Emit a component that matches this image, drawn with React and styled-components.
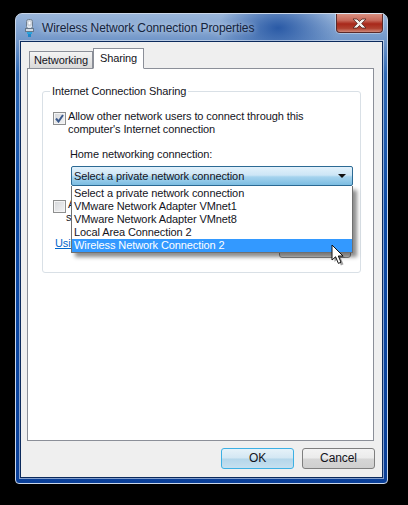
import React from 'react'
import styled, { createGlobalStyle } from 'styled-components'

const options = [
    'Select a private network connection',
    'VMware Network Adapter VMnet1',
    'VMware Network Adapter VMnet8',
    'Local Area Connection 2',
    'Wireless Network Connection 2',
]

function PlugIcon() {
    return (
        <svg width="9" height="19" viewBox="0 0 9 19">
            <rect x="1.5" y="0.5" width="6" height="9" rx="2" fill="#dfe6ee" stroke="#6f7f90" />
            <rect x="3" y="2" width="3" height="4" fill="#fff" stroke="#9aa6b4" strokeWidth="0.6" />
            <rect x="0.5" y="9.5" width="8" height="3" fill="#cfd8e2" stroke="#66788c" />
            <rect x="2" y="13" width="5" height="2" fill="#29a3dc" />
            <rect x="3" y="15" width="3" height="3" fill="#1f86c8" />
        </svg>
    )
}

function CloseGlyph() {
    return (
        <svg width="15" height="11" viewBox="0 0 15 11">
            <path d="M1 1 H5 L7.5 3.5 L10 1 H14 L9.7 5.5 L14 10 H10 L7.5 7.5 L5 10 H1 L5.3 5.5 Z" fill="#f4f1ee" stroke="#4b2320" strokeWidth="0.8" />
        </svg>
    )
}

function CheckMark() {
    return (
        <svg width="9" height="9" viewBox="0 0 9 9">
            <path d="M1 4.5 L3.5 7.5 L8 1" fill="none" stroke="#3c5a8c" strokeWidth="2" />
        </svg>
    )
}

function Pointer() {
    return (
        <svg width="17" height="22" viewBox="0 0 17 22">
            <path d="M2 2 V17 L5.6 13.8 L8.4 20.4 L11 19.2 L8.3 13 H13 Z" fill="#555" opacity="0.55" transform="translate(1.5 1)" />
            <path d="M1 1 V16 L4.6 12.8 L7.4 19.4 L10 18.2 L7.3 12 H12 Z" fill="#fff" stroke="#111" strokeWidth="1" />
        </svg>
    )
}

function App() {
    return (
        <Desktop>
            <GlobalStyle />
            <Window>
                <TitleBar>
                    <PlugIcon />
                    <Title>Wireless Network Connection Properties</Title>
                    <CloseButton><CloseGlyph /></CloseButton>
                </TitleBar>
                <Client>
                    <Tabs>
                        <Tab>Networking</Tab>
                        <Tab active>Sharing</Tab>
                    </Tabs>
                    <Panel>
                        <Group>
                            <Legend>Internet Connection Sharing</Legend>
                            <CheckRow>
                                <CheckBox checked><CheckMark /></CheckBox>
                                <Label>
                                    Allow other network users to connect through this<br />
                                    computer's Internet connection
                                </Label>
                            </CheckRow>
                            <HomeLabel>Home networking connection:</HomeLabel>
                            <SelectWrap>
                                <SelectFace>
                                    Select a private network connection
                                    <Arrow />
                                </SelectFace>
                                <DropList>
                                    {options.map((item, i) => (
                                        <DropItem key={item} selected={i === 4}>{item}</DropItem>
                                    ))}
                                </DropList>
                            </SelectWrap>
                            <SecondRow>
                                <CheckBox />
                                <Label>
                                    Allow other network users to control or disable the<br />
                                    <Indent>shared Internet connection</Indent>
                                </Label>
                            </SecondRow>
                            <BottomRow>
                                <Link>Using ICS (Internet Connection Sharing)</Link>
                                <SettingsButton>Settings...</SettingsButton>
                            </BottomRow>
                        </Group>
                    </Panel>
                    <Footer>
                        <Button primary>OK</Button>
                        <Button>Cancel</Button>
                    </Footer>
                </Client>
            </Window>
            <CursorSpot><Pointer /></CursorSpot>
        </Desktop>
    )
}

export default App

const GlobalStyle = createGlobalStyle`
    html, body {
        margin: 0;
        padding: 0;
        background: #000;
    }
`

const Desktop = styled.div`
    position: relative;
    width: 408px;
    height: 505px;
    padding: 13px 20px 21px 15px;
    box-sizing: border-box;
    background: #000;
    font-family: "Liberation Sans", Arial, sans-serif;
    font-size: 11px;
    letter-spacing: -0.1px;
    color: #14141c;
    overflow: hidden;
`

const Window = styled.div`
    width: 373px;
    height: 471px;
    box-sizing: border-box;
    display: flex;
    flex-direction: column;
    border: 1px solid #c9d6e8;
    border-radius: 7px 7px 4px 4px;
    padding: 0 4px 5px 4px;
    background:
        radial-gradient(ellipse 60px 34px at 262px 14px, #2a5aa6 0%, rgba(42, 90, 166, 0) 100%),
        linear-gradient(180deg, #9ab6da 0, #6f95c8 28px, #2e68b4 60px, #0c4aa6 200px, #0a3f98 100%);
`

const TitleBar = styled.div`
    height: 27px;
    flex: none;
    display: flex;
    align-items: flex-start;
    padding-left: 5px;
    svg {
        flex: none;
    }
    > svg:first-child {
        margin-top: 5px;
    }
`

const Title = styled.div`
    margin: 6px 0 0 8px;
    font-size: 12px;
    letter-spacing: -0.08px;
    line-height: 16px;
    color: #14233c;
    text-shadow: 0 0 6px rgba(255, 255, 255, 0.75);
    white-space: nowrap;
`

const CloseButton = styled.div`
    margin-left: auto;
    width: 47px;
    height: 19px;
    box-sizing: border-box;
    display: flex;
    align-items: center;
    justify-content: center;
    border: 1px solid #5a2a2a;
    border-top: none;
    border-radius: 0 0 4px 4px;
    background: linear-gradient(180deg, #d88f80 0, #c7695a 35%, #a8281a 55%, #b0412f 80%, #d0897a 100%);
    box-shadow: 0 0 0 1px rgba(255, 255, 255, 0.35);
`

const Client = styled.div`
    flex: 1;
    display: flex;
    flex-direction: column;
    box-sizing: border-box;
    padding: 7px 7px 8px 6px;
    background: #efefef;
    border: 1px solid #0c2a5c;
    box-shadow: 0 0 0 1px rgba(255, 255, 255, 0.5);
`

const Tabs = styled.div`
    height: 20px;
    flex: none;
    display: flex;
    align-items: flex-end;
    padding-left: 2px;
    margin-bottom: -1px;
    position: relative;
    z-index: 1;
`

const Tab = styled.div`
    box-sizing: border-box;
    display: flex;
    justify-content: center;
    border: 1px solid #8b8f98;
    width: ${props => props.active ? '51px' : '64px'};
    height: ${props => props.active ? '21px' : '18px'};
    padding-top: ${props => props.active ? '3px' : '2px'};
    border-bottom: ${props => props.active ? '1px solid #fff' : '1px solid #8b8f98'};
    background: ${props => props.active ? '#fff' : 'linear-gradient(180deg, #f4f4f4, #d9d9d9)'};
    line-height: 13px;
`

const Panel = styled.div`
    flex: 1;
    box-sizing: border-box;
    margin-right: 1px;
    padding: 16px 12px 0 14px;
    background: #fff;
    border: 1px solid #8b8f98;
`

const Group = styled.fieldset`
    position: relative;
    height: 188px;
    box-sizing: border-box;
    margin: 0;
    padding: 0 0 0 10px;
    border: 1px solid #d9e0e6;
    border-radius: 3px;
`

const Legend = styled.legend`
    padding: 0 2px;
    margin-left: -3px;
    line-height: 13px;
`

const CheckRow = styled.div`
    display: flex;
    gap: 2px;
    margin-top: 14px;
    line-height: 13px;
`

const SecondRow = styled(CheckRow)`
    margin-top: 14px;
`

const Label = styled.div`
    white-space: nowrap;
    margin-top: -2px;
`

const Indent = styled.span`
    margin-left: -2px;
`

const CheckBox = styled.div`
    width: 13px;
    height: 13px;
    flex: none;
    box-sizing: border-box;
    display: flex;
    align-items: center;
    justify-content: center;
    border: 1px solid #8e8f8f;
    box-shadow: inset 0 0 0 1px #f4f4f4;
    background: linear-gradient(135deg, #d4d6d9, #f4f4f5);
`

const HomeLabel = styled.div`
    margin: 12px 0 0 17px;
    line-height: 13px;
`

const SelectWrap = styled.div`
    position: relative;
    margin: 5px 7px 0 18px;
`

const SelectFace = styled.div`
    height: 20px;
    box-sizing: border-box;
    display: flex;
    align-items: center;
    justify-content: space-between;
    padding: 0 6px 0 2px;
    border: 1px solid #2c6a94;
    border-radius: 2px;
    background: linear-gradient(180deg, #e2f1fb 0, #cde6f6 45%, #a5d3ee 55%, #7cbde2 100%);
`

const Arrow = styled.span`
    width: 0;
    height: 0;
    border-left: 4px solid transparent;
    border-right: 4px solid transparent;
    border-top: 4px solid #111;
`

const DropList = styled.div`
    position: absolute;
    z-index: 2;
    top: 20px;
    left: 0;
    right: 0;
    box-sizing: border-box;
    height: 67px;
    padding-top: 1px;
    background: #fff;
    border: 1px solid #6f6f6f;
    border-top: none;
    box-shadow: 4px 4px 4px rgba(0, 0, 0, 0.45);
`

const DropItem = styled.div`
    height: 13px;
    line-height: 13px;
    padding-left: 2px;
    white-space: nowrap;
    color: ${props => props.selected ? '#fff' : '#14141c'};
    background: ${props => props.selected ? '#3399ff' : 'transparent'};
`

const BottomRow = styled.div`
    display: flex;
    justify-content: space-between;
    align-items: flex-start;
    margin: 0 9px 0 2px;
`

const Link = styled.span`
    margin-top: 13px;
    line-height: 13px;
    color: #0066cc;
    text-decoration: underline;
    white-space: nowrap;
`

const SettingsButton = styled.div`
    margin-top: 13px;
    width: 72px;
    height: 21px;
    box-sizing: border-box;
    text-align: center;
    line-height: 19px;
    border: 1px solid #8b8b8b;
    border-radius: 3px;
    background: linear-gradient(180deg, #f3f3f3, #d6d6d6);
`

const Footer = styled.div`
    height: 28px;
    flex: none;
    display: flex;
    justify-content: flex-end;
    align-items: flex-end;
    gap: 8px;
`

const Button = styled.div`
    width: 73px;
    height: 21px;
    box-sizing: border-box;
    text-align: center;
    font-size: 12px;
    line-height: 19px;
    border: 1px solid ${props => props.primary ? '#3cb0e4' : '#7f7f7f'};
    border-radius: 3px;
    background: ${props => props.primary
        ? 'linear-gradient(180deg, #e6f2f9 0, #d3e7f3 48%, #b4d6ea 52%, #c6e0f0 100%)'
        : 'linear-gradient(180deg, #f3f3f3 0, #ebebeb 48%, #d6d6d6 52%, #cfcfcf 100%)'};
`

const CursorSpot = styled.div`
    position: absolute;
    left: 331px;
    top: 244px;
    z-index: 3;
    line-height: 0;
`
